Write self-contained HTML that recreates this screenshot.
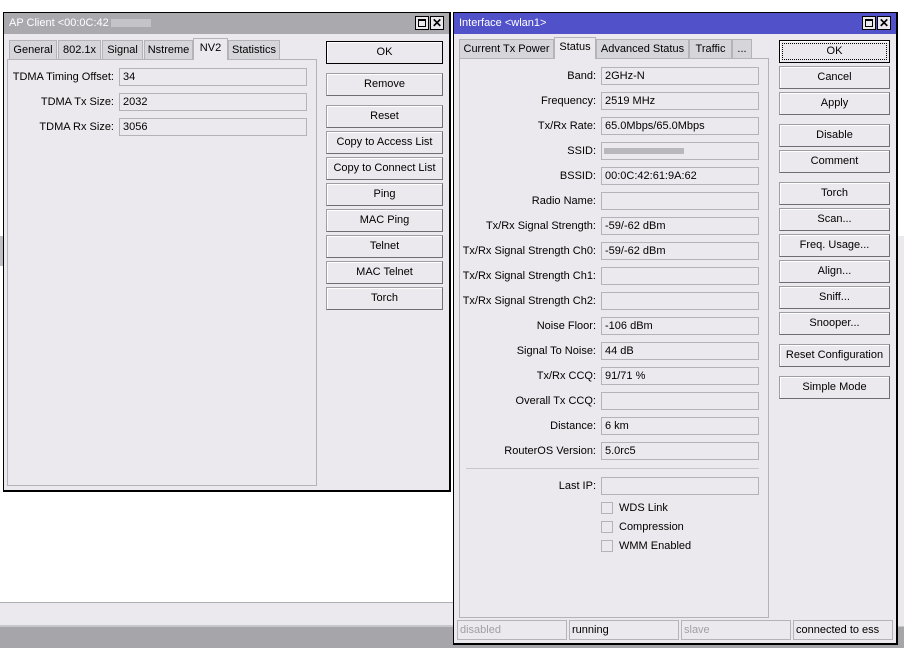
<!DOCTYPE html>
<html><head><meta charset="utf-8"><style>
*{box-sizing:border-box;margin:0;padding:0}
body{width:904px;height:648px;position:relative;overflow:hidden;background:#fff;font-family:"Liberation Sans",sans-serif;font-size:11px;color:#000}
.a{position:absolute}
.win{position:absolute;background:#ebe9ed;border:1px solid #000}
.title{position:absolute;left:0;right:0;top:0;height:21px;color:#fff;font-size:11px;line-height:21px;padding-left:5px}
.tb{position:absolute;top:3px;width:14px;height:14px;background:#ebe9ed;border:1px solid #000}
.tab{position:absolute;height:20px;border:1px solid #b4b3b8;border-bottom:none;background:#d6d5da;line-height:19px;text-align:center;white-space:nowrap}
.tab.sel{background:#ebe9ed;height:22px;z-index:2;line-height:18px}
.panel{position:absolute;border:1px solid #b4b3b8;background:#ebe9ed}
.btn{position:absolute;height:23px;border:1px solid #9e9da2;border-right-color:#6e6d72;border-bottom-color:#6e6d72;background:#ebe9ed;text-align:center;line-height:21px;box-shadow:inset 1px 1px 0 #fff}
.btn.def{border:1px solid #000}
.lbl{position:absolute;text-align:right;white-space:nowrap;line-height:18px}
.fld{position:absolute;height:18px;border:1px solid #b4b3b8;background:#ebe9ed;line-height:16px;padding-left:3px;white-space:nowrap}
.cb{position:absolute;width:12px;height:12px;border:1px solid #b4b3b8;background:#ebe9ed}
.st{position:absolute;top:620px;height:20px;border:1px solid #b4b3b8;line-height:18px;padding-left:2px}
</style></head><body>
<div class="a" style="left:0;top:602px;width:460px;height:24px;background:#ebe9ee;border-top:1px solid #b0afb4"></div>
<div class="a" style="left:0;top:625px;width:904px;height:2px;background:#c8c7cc"></div>
<div class="a" style="left:0;top:627px;width:904px;height:21px;background:#a6a5aa"></div>
<div class="a" style="left:0;top:236px;width:4px;height:30px;background:#c0bfc4"></div>
<div class="a" style="left:897px;top:236px;width:7px;height:390px;background:#ebe9ee"></div>

<div class="win" style="left:3px;top:12px;width:448px;height:480px;border-width:1px 2px 2px 1px">
 <div class="title" style="background:#aaa9ae">AP Client &lt;00:0C:42<span style="display:inline-block;width:40px;height:8px;background:#c4c3c8;vertical-align:middle;margin-left:2px"></span></div>
 <div class="tb" style="left:411px"><div class="a" style="left:2px;top:2px;width:8px;height:8px;border:1px solid #000;border-top-width:2px"></div></div>
 <div class="tb" style="left:426px;font-size:12px;font-weight:bold;line-height:12px;text-align:center">✕</div>
 <div class="tab" style="left:5px;top:27px;width:48px">General</div>
 <div class="tab" style="left:54px;top:27px;width:43px">802.1x</div>
 <div class="tab" style="left:98px;top:27px;width:41px">Signal</div>
 <div class="tab" style="left:140px;top:27px;width:49px">Nstreme</div>
 <div class="tab sel" style="left:189px;top:25px;width:35px">NV2</div>
 <div class="tab" style="left:224px;top:27px;width:52px">Statistics</div>
 <div class="panel" style="left:3px;top:46px;width:310px;height:427px"></div>
 <div class="lbl" style="left:0;top:55px;width:110px">TDMA Timing Offset:</div>
 <div class="fld" style="left:115px;top:55px;width:188px">34</div>
 <div class="lbl" style="left:0;top:80px;width:110px">TDMA Tx Size:</div>
 <div class="fld" style="left:115px;top:80px;width:188px">2032</div>
 <div class="lbl" style="left:0;top:105px;width:110px">TDMA Rx Size:</div>
 <div class="fld" style="left:115px;top:105px;width:188px">3056</div>
 <div class="btn def" style="left:322px;top:28px;width:117px">OK</div>
 <div class="btn" style="left:322px;top:60px;width:117px">Remove</div>
 <div class="btn" style="left:322px;top:92px;width:117px">Reset</div>
 <div class="btn" style="left:322px;top:118px;width:117px">Copy to Access List</div>
 <div class="btn" style="left:322px;top:144px;width:117px">Copy to Connect List</div>
 <div class="btn" style="left:322px;top:170px;width:117px">Ping</div>
 <div class="btn" style="left:322px;top:196px;width:117px">MAC Ping</div>
 <div class="btn" style="left:322px;top:222px;width:117px">Telnet</div>
 <div class="btn" style="left:322px;top:248px;width:117px">MAC Telnet</div>
 <div class="btn" style="left:322px;top:274px;width:117px">Torch</div>
</div>

<div class="win" style="left:453px;top:12px;width:445px;height:633px;border-width:1px 2px 2px 1px">
 <div class="title" style="background:#5151c9">Interface &lt;wlan1&gt;</div>
 <div class="tb" style="left:408px"><div class="a" style="left:2px;top:2px;width:8px;height:8px;border:1px solid #000;border-top-width:2px"></div></div>
 <div class="tb" style="left:423px;font-size:12px;font-weight:bold;line-height:12px;text-align:center">✕</div>
 <div class="tab" style="left:5px;top:26px;width:95px">Current Tx Power</div>
 <div class="tab sel" style="left:100px;top:24px;width:42px">Status</div>
 <div class="tab" style="left:142px;top:26px;width:93px">Advanced Status</div>
 <div class="tab" style="left:235px;top:26px;width:43px">Traffic</div>
 <div class="tab" style="left:278px;top:26px;width:20px">...</div>
 <div class="panel" style="left:5px;top:45px;width:310px;height:560px"></div>
 <div class="a" style="left:12px;top:455px;width:293px;height:1px;background:#c8c7cc"></div>

 <div class="lbl" style="left:0;top:54px;width:142px">Band:</div><div class="fld" style="left:147px;top:54px;width:158px">2GHz-N</div>
 <div class="lbl" style="left:0;top:79px;width:142px">Frequency:</div><div class="fld" style="left:147px;top:79px;width:158px">2519 MHz</div>
 <div class="lbl" style="left:0;top:104px;width:142px">Tx/Rx Rate:</div><div class="fld" style="left:147px;top:104px;width:158px">65.0Mbps/65.0Mbps</div>
 <div class="lbl" style="left:0;top:129px;width:142px">SSID:</div><div class="fld" style="left:147px;top:129px;width:158px"><div class="a" style="left:2px;top:5px;width:80px;height:6px;background:#b8b7bc"></div></div>
 <div class="lbl" style="left:0;top:154px;width:142px">BSSID:</div><div class="fld" style="left:147px;top:154px;width:158px">00:0C:42:61:9A:62</div>
 <div class="lbl" style="left:0;top:179px;width:142px">Radio Name:</div><div class="fld" style="left:147px;top:179px;width:158px"></div>
 <div class="lbl" style="left:0;top:204px;width:142px">Tx/Rx Signal Strength:</div><div class="fld" style="left:147px;top:204px;width:158px">-59/-62 dBm</div>
 <div class="lbl" style="left:0;top:229px;width:142px">Tx/Rx Signal Strength Ch0:</div><div class="fld" style="left:147px;top:229px;width:158px">-59/-62 dBm</div>
 <div class="lbl" style="left:0;top:254px;width:142px">Tx/Rx Signal Strength Ch1:</div><div class="fld" style="left:147px;top:254px;width:158px"></div>
 <div class="lbl" style="left:0;top:279px;width:142px">Tx/Rx Signal Strength Ch2:</div><div class="fld" style="left:147px;top:279px;width:158px"></div>
 <div class="lbl" style="left:0;top:304px;width:142px">Noise Floor:</div><div class="fld" style="left:147px;top:304px;width:158px">-106 dBm</div>
 <div class="lbl" style="left:0;top:329px;width:142px">Signal To Noise:</div><div class="fld" style="left:147px;top:329px;width:158px">44 dB</div>
 <div class="lbl" style="left:0;top:354px;width:142px">Tx/Rx CCQ:</div><div class="fld" style="left:147px;top:354px;width:158px">91/71 %</div>
 <div class="lbl" style="left:0;top:379px;width:142px">Overall Tx CCQ:</div><div class="fld" style="left:147px;top:379px;width:158px"></div>
 <div class="lbl" style="left:0;top:404px;width:142px">Distance:</div><div class="fld" style="left:147px;top:404px;width:158px">6 km</div>
 <div class="lbl" style="left:0;top:429px;width:142px">RouterOS Version:</div><div class="fld" style="left:147px;top:429px;width:158px">5.0rc5</div>
 <div class="lbl" style="left:0;top:464px;width:142px">Last IP:</div><div class="fld" style="left:147px;top:464px;width:158px"></div>
 <div class="cb" style="left:147px;top:489px"></div><div class="lbl" style="left:165px;top:486px">WDS Link</div>
 <div class="cb" style="left:147px;top:508px"></div><div class="lbl" style="left:165px;top:505px">Compression</div>
 <div class="cb" style="left:147px;top:527px"></div><div class="lbl" style="left:165px;top:524px">WMM Enabled</div>

 <div class="btn def" style="left:325px;top:27px;width:111px;outline:1px dotted #000;outline-offset:-4px">OK</div>
 <div class="btn" style="left:325px;top:53px;width:111px">Cancel</div>
 <div class="btn" style="left:325px;top:79px;width:111px">Apply</div>
 <div class="btn" style="left:325px;top:111px;width:111px">Disable</div>
 <div class="btn" style="left:325px;top:137px;width:111px">Comment</div>
 <div class="btn" style="left:325px;top:169px;width:111px">Torch</div>
 <div class="btn" style="left:325px;top:195px;width:111px">Scan...</div>
 <div class="btn" style="left:325px;top:221px;width:111px">Freq. Usage...</div>
 <div class="btn" style="left:325px;top:247px;width:111px">Align...</div>
 <div class="btn" style="left:325px;top:273px;width:111px">Sniff...</div>
 <div class="btn" style="left:325px;top:299px;width:111px">Snooper...</div>
 <div class="btn" style="left:325px;top:331px;width:111px">Reset Configuration</div>
 <div class="btn" style="left:325px;top:363px;width:111px">Simple Mode</div>

 <div class="st" style="left:3px;top:607px;width:110px;color:#a0a0a4">disabled</div>
 <div class="st" style="left:115px;top:607px;width:110px">running</div>
 <div class="st" style="left:227px;top:607px;width:110px;color:#a0a0a4">slave</div>
 <div class="st" style="left:339px;top:607px;width:100px">connected to ess</div>
</div>
</body></html>
